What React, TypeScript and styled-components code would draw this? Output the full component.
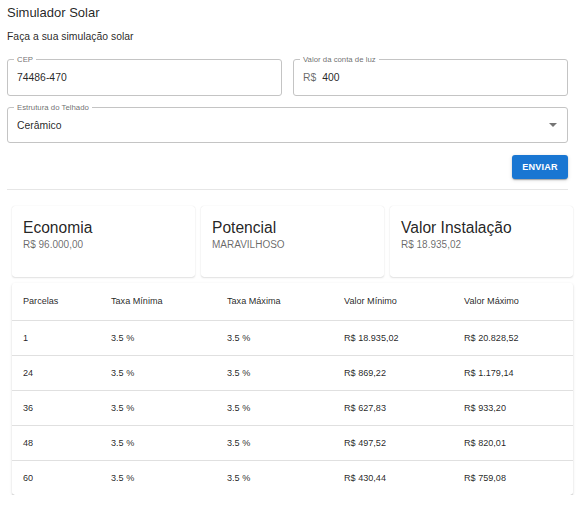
import React from "react";
import styled, { createGlobalStyle } from "styled-components";

const Global = createGlobalStyle`
  html, body { margin: 0; padding: 0; background: #fff; }
  body { font-family: "Liberation Sans", Arial, sans-serif; color: rgba(0,0,0,0.87); }
  * { box-sizing: border-box; }
`;

const Page = styled.div`
  width: 585px;
  padding: 0 17px 0 7px;
  display: flex;
  flex-direction: column;
`;

const Title = styled.h1`
  margin: 0;
  padding-top: 4px;
  font-size: 13px;
  font-weight: 400;
  line-height: 17px;
  color: rgba(0,0,0,0.87);
`;

const Subtitle = styled.p`
  margin: 9px 0 0;
  font-size: 10.4px;
  line-height: 14px;
`;

const FieldRow = styled.div`
  display: grid;
  grid-template-columns: 1fr 1fr;
  gap: 11px;
  margin-top: 15px;
`;

const Field = styled.div`
  position: relative;
  height: 37px;
  border: 1px solid #c4c4c4;
  border-radius: 3px;
  display: flex;
  align-items: center;
  padding: 0 9px;
  font-size: 10.4px;
  color: rgba(0,0,0,0.87);
`;

const Label = styled.span`
  position: absolute;
  top: -5px;
  left: 6px;
  padding: 0 3px;
  background: #fff;
  font-size: 7.8px;
  line-height: 9px;
  color: rgba(0,0,0,0.6);
`;

const Adorn = styled.span`
  color: rgba(0,0,0,0.6);
  margin-right: 6px;
`;

const SelectField = styled(Field)`
  margin-top: 11px;
  height: 36px;
  justify-content: space-between;
`;

const Arrow = styled.span`
  width: 0;
  height: 0;
  border-left: 4px solid transparent;
  border-right: 4px solid transparent;
  border-top: 4px solid rgba(0,0,0,0.54);
  margin-right: 1px;
`;

const Actions = styled.div`
  display: flex;
  justify-content: flex-end;
  margin-top: 12px;
`;

const Button = styled.button`
  width: 56px;
  height: 24px;
  border: none;
  border-radius: 3px;
  background: #1976d2;
  color: #fff;
  font-family: inherit;
  font-size: 9.1px;
  font-weight: 700;
  letter-spacing: 0.2px;
  box-shadow: 0 2px 1px -1px rgba(0,0,0,0.2), 0 1px 2px 0 rgba(0,0,0,0.14), 0 1px 4px 0 rgba(0,0,0,0.12);
  padding: 0;
`;

const Divider = styled.hr`
  margin: 10px 0 0;
  border: none;
  border-top: 1px solid #e6e6e6;
`;

const Cards = styled.div`
  display: grid;
  grid-template-columns: repeat(3, 183px);
  gap: 6px;
  margin: 16px 0 0 5px;
`;

const cardShadow = `0 1px 1px -1px rgba(0,0,0,0.15), 0 0 1px 0 rgba(0,0,0,0.14), 0 1px 2px 0 rgba(0,0,0,0.1)`;
const paperShadow = `0 2px 1px -1px rgba(0,0,0,0.2), 0 1px 1px 0 rgba(0,0,0,0.14), 0 1px 3px 0 rgba(0,0,0,0.12)`;

const Card = styled.div`
  height: 71px;
  border-radius: 3px;
  box-shadow: ${cardShadow};
  padding: 12px 11px;
`;

const CardTitle = styled.div`
  font-size: 15.6px;
  line-height: 20px;
  color: rgba(0,0,0,0.87);
`;

const CardValue = styled.div`
  font-size: 10px;
  line-height: 13px;
  color: rgba(0,0,0,0.6);
`;

const TablePaper = styled.div`
  margin: 6px 0 0 5px;
  width: 561px;
  border-radius: 3px;
  box-shadow: ${paperShadow};
  overflow: hidden;
`;

const Table = styled.table`
  width: 100%;
  border-collapse: collapse;
  table-layout: fixed;
  font-size: 9.1px;
`;

const Th = styled.th<{ $w: number }>`
  width: ${(p) => p.$w}px;
  height: 37px;
  text-align: left;
  font-weight: 400;
  padding: 0 11px;
  color: rgba(0,0,0,0.87);
  border-bottom: 1px solid #e0e0e0;
`;

const Td = styled.td`
  height: 35px;
  padding: 0 11px;
  color: rgba(0,0,0,0.87);
`;

const Tr = styled.tr`
  &:not(:last-child) td { border-bottom: 1px solid #e0e0e0; }
`;

const cols = [
  { name: "Parcelas", w: 88 },
  { name: "Taxa Mínima", w: 116 },
  { name: "Taxa Máxima", w: 117 },
  { name: "Valor Mínimo", w: 120 },
  { name: "Valor Máximo", w: 120 },
];

const rows = [
  ["1", "3.5 %", "3.5 %", "R$ 18.935,02", "R$ 20.828,52"],
  ["24", "3.5 %", "3.5 %", "R$ 869,22", "R$ 1.179,14"],
  ["36", "3.5 %", "3.5 %", "R$ 627,83", "R$ 933,20"],
  ["48", "3.5 %", "3.5 %", "R$ 497,52", "R$ 820,01"],
  ["60", "3.5 %", "3.5 %", "R$ 430,44", "R$ 759,08"],
];

const cards = [
  { t: "Economia", v: "R$ 96.000,00" },
  { t: "Potencial", v: "MARAVILHOSO" },
  { t: "Valor Instalação", v: "R$ 18.935,02" },
];

export default function App() {
  return (
    <>
      <Global />
      <Page>
        <Title>Simulador Solar</Title>
        <Subtitle>Faça a sua simulação solar</Subtitle>
        <FieldRow>
          <Field>
            <Label>CEP</Label>
            74486-470
          </Field>
          <Field>
            <Label>Valor da conta de luz</Label>
            <Adorn>R$</Adorn>400
          </Field>
        </FieldRow>
        <SelectField>
          <Label>Estrutura do Telhado</Label>
          <span>Cerâmico</span>
          <Arrow />
        </SelectField>
        <Actions>
          <Button>ENVIAR</Button>
        </Actions>
        <Divider />
        <Cards>
          {cards.map((c) => (
            <Card key={c.t}>
              <CardTitle>{c.t}</CardTitle>
              <CardValue>{c.v}</CardValue>
            </Card>
          ))}
        </Cards>
        <TablePaper>
          <Table>
            <thead>
              <tr>
                {cols.map((c) => (
                  <Th key={c.name} $w={c.w}>{c.name}</Th>
                ))}
              </tr>
            </thead>
            <tbody>
              {rows.map((r) => (
                <Tr key={r[0]}>
                  {r.map((cell, i) => (
                    <Td key={i}>{cell}</Td>
                  ))}
                </Tr>
              ))}
            </tbody>
          </Table>
        </TablePaper>
      </Page>
    </>
  );
}
